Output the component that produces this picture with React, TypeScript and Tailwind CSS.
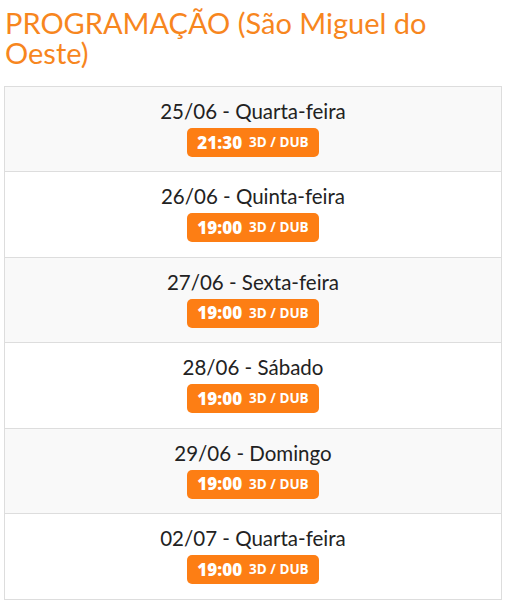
const sessions = [
  { date: "25/06 - Quarta-feira", time: "21:30" },
  { date: "26/06 - Quinta-feira", time: "19:00" },
  { date: "27/06 - Sexta-feira", time: "19:00" },
  { date: "28/06 - Sábado", time: "19:00" },
  { date: "29/06 - Domingo", time: "19:00" },
  { date: "02/07 - Quarta-feira", time: "19:00" },
];

export default function App() {
  return (
    <div className="min-h-screen bg-white px-1 pt-[8px] font-['Lato',sans-serif]">
      <h3 className="pl-[1px] text-[29px] leading-[30px] font-normal text-[#f7861e]">
        PROGRAMAÇÃO (São Miguel do Oeste)
      </h3>
      <div className="mt-[18px] w-[498px] border border-[#dddddd]">
        {sessions.map((s, i) => (
          <div
            key={s.date}
            className={
              "flex flex-col items-center border-[#dddddd] pt-[10px] " +
              (i > 0 ? "h-[85.5px] border-t " : "h-[84px] ") +
              (i % 2 === 0 ? "bg-[#f9f9f9]" : "bg-white")
            }
          >
            <div className="text-[20.5px] leading-[28px] text-[#222222]">{s.date}</div>
            <div className="mt-[3px] flex h-[29px] w-[132px] items-center justify-center gap-[7px] rounded-[5px] bg-[#fd7e14] font-['Open_Sans','Noto_Sans',sans-serif] text-white">
              <span className="text-[17px] font-extrabold">{s.time}</span>
              <span className="text-[13.5px] font-bold">3D / DUB</span>
            </div>
          </div>
        ))}
      </div>
    </div>
  );
}
